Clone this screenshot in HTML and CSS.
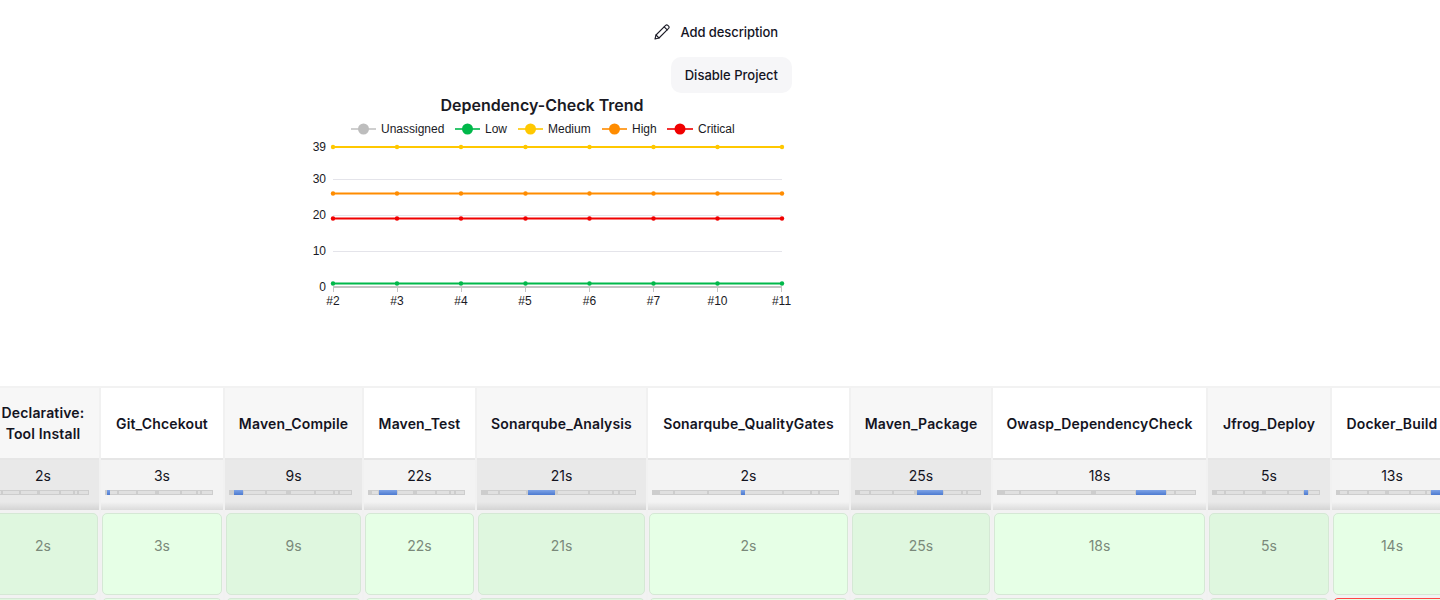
FILE: index.html
```html
<!DOCTYPE html>
<html lang="en">
<head>
  <meta charset="UTF-8" />
  <meta name="viewport" content="width=device-width, initial-scale=1.0"/>
  <title>Pipeline</title>
  <link rel="stylesheet" href="styles.css">
</head>
<body>
  <div class="top">
    <a class="action" href="#">
      <svg class="pencil" width="16" height="16" viewBox="0 0 16 16" fill="none" stroke="#1b1b26" stroke-width="1.1" stroke-linejoin="round" stroke-linecap="round">
        <path d="M1 15l1-4L11.6 1.4a1.6 1.6 0 0 1 2.2 0l.8.8a1.6 1.6 0 0 1 0 2.2L5 14z"/>
        <path d="M10.2 2.8l3 3"/>
        <path d="M2 11l3 3"/>
      </svg>
      Add description
    </a>
    <button class="disable">Disable Project</button>

    <svg class="chart" width="492" height="214" viewBox="300 96 492 214">
      <text class="chart-title" x="542" y="111" text-anchor="middle">Dependency-Check Trend</text>

      <g class="legend">
        <line x1="351" x2="376" y1="129" y2="129" stroke="#c4c4c4"/><circle cx="363.500" cy="129" r="5.500" fill="#bdbdbd"/><text x="381" y="133">Unassigned</text>
        <line x1="455" x2="480" y1="129" y2="129" stroke="#00b84a"/><circle cx="467.500" cy="129" r="5.500" fill="#00b84a"/><text x="485" y="133">Low</text>
        <line x1="518" x2="543" y1="129" y2="129" stroke="#ffc800"/><circle cx="530.500" cy="129" r="5.500" fill="#ffc800"/><text x="548" y="133">Medium</text>
        <line x1="602" x2="627" y1="129" y2="129" stroke="#ff8c00"/><circle cx="614.500" cy="129" r="5.500" fill="#ff8c00"/><text x="632" y="133">High</text>
        <line x1="667" x2="693" y1="129" y2="129" stroke="#f00000"/><circle cx="680" cy="129" r="5.500" fill="#f00000"/><text x="698" y="133">Critical</text>
      </g>

      <g class="grid">
        <line x1="333" x2="782" y1="179.500" y2="179.500"/>
        <line x1="333" x2="782" y1="215.500" y2="215.500"/>
        <line x1="333" x2="782" y1="251.500" y2="251.500"/>
      </g>
      <line x1="333" x2="782" y1="287" y2="287" stroke="#c4c4c4" stroke-width="2"/>
      <g class="ticks">
        <line x1="333.500" x2="333.500" y1="287" y2="292"/>
        <line x1="397.500" x2="397.500" y1="287" y2="292"/>
        <line x1="461.500" x2="461.500" y1="287" y2="292"/>
        <line x1="525.500" x2="525.500" y1="287" y2="292"/>
        <line x1="589.500" x2="589.500" y1="287" y2="292"/>
        <line x1="653.500" x2="653.500" y1="287" y2="292"/>
        <line x1="717.500" x2="717.500" y1="287" y2="292"/>
        <line x1="781.500" x2="781.500" y1="287" y2="292"/>
      </g>

      <g class="y-labels">
        <text x="326" y="151">39</text>
        <text x="326" y="183">30</text>
        <text x="326" y="219">20</text>
        <text x="326" y="255">10</text>
        <text x="326" y="291">0</text>
      </g>
      <g class="x-labels">
        <text x="333" y="305">#2</text>
        <text x="397" y="305">#3</text>
        <text x="461" y="305">#4</text>
        <text x="525" y="305">#5</text>
        <text x="589.500" y="305">#6</text>
        <text x="653.500" y="305">#7</text>
        <text x="717.500" y="305">#10</text>
        <text x="781.500" y="305">#11</text>
      </g>

      <g class="series" stroke="#ffc800" fill="#ffc800">
        <line x1="333" x2="782" y1="147" y2="147"/>
        <circle cx="333" cy="147" r="2.200"/><circle cx="397" cy="147" r="2.200"/><circle cx="461" cy="147" r="2.200"/><circle cx="525.500" cy="147" r="2.200"/><circle cx="589.500" cy="147" r="2.200"/><circle cx="653.500" cy="147" r="2.200"/><circle cx="717.500" cy="147" r="2.200"/><circle cx="782" cy="147" r="2.200"/>
      </g>
      <g class="series" stroke="#ff8c00" fill="#ff8c00">
        <line x1="333" x2="782" y1="193.500" y2="193.500"/>
        <circle cx="333" cy="193.500" r="2.200"/><circle cx="397" cy="193.500" r="2.200"/><circle cx="461" cy="193.500" r="2.200"/><circle cx="525.500" cy="193.500" r="2.200"/><circle cx="589.500" cy="193.500" r="2.200"/><circle cx="653.500" cy="193.500" r="2.200"/><circle cx="717.500" cy="193.500" r="2.200"/><circle cx="782" cy="193.500" r="2.200"/>
      </g>
      <g class="series" stroke="#f00000" fill="#f00000">
        <line x1="333" x2="782" y1="218.500" y2="218.500"/>
        <circle cx="333" cy="218.500" r="2.200"/><circle cx="397" cy="218.500" r="2.200"/><circle cx="461" cy="218.500" r="2.200"/><circle cx="525.500" cy="218.500" r="2.200"/><circle cx="589.500" cy="218.500" r="2.200"/><circle cx="653.500" cy="218.500" r="2.200"/><circle cx="717.500" cy="218.500" r="2.200"/><circle cx="782" cy="218.500" r="2.200"/>
      </g>
      <g class="series" stroke="#00b84a" fill="#00b84a">
        <line x1="333" x2="782" y1="283.500" y2="283.500"/>
        <circle cx="333" cy="283.500" r="2.200"/><circle cx="397" cy="283.500" r="2.200"/><circle cx="461" cy="283.500" r="2.200"/><circle cx="525.500" cy="283.500" r="2.200"/><circle cx="589.500" cy="283.500" r="2.200"/><circle cx="653.500" cy="283.500" r="2.200"/><circle cx="717.500" cy="283.500" r="2.200"/><circle cx="782" cy="283.500" r="2.200"/>
      </g>
    </svg>
  </div>

  <div class="stages">
    <div class="col odd">
      <div class="head">Declarative:<br>Tool Install</div>
      <div class="avg"><span>2s</span><div class="bar"><i style="left:0%;width:1.7%"></i></div></div>
      <div class="cell"><span>2s</span></div>
      <div class="cell"></div>
    </div>
    <div class="col">
      <div class="head">Git_Chcekout</div>
      <div class="avg"><span>3s</span><div class="bar"><i style="left:1.7%;width:2.5%"></i></div></div>
      <div class="cell"><span>3s</span></div>
      <div class="cell"></div>
    </div>
    <div class="col odd">
      <div class="head">Maven_Compile</div>
      <div class="avg"><span>9s</span><div class="bar"><i style="left:4.2%;width:7.5%"></i></div></div>
      <div class="cell"><span>9s</span></div>
      <div class="cell"></div>
    </div>
    <div class="col">
      <div class="head">Maven_Test</div>
      <div class="avg"><span>22s</span><div class="bar"><i style="left:11.7%;width:18.3%"></i></div></div>
      <div class="cell"><span>22s</span></div>
      <div class="cell"></div>
    </div>
    <div class="col odd">
      <div class="head">Sonarqube_Analysis</div>
      <div class="avg"><span>21s</span><div class="bar"><i style="left:30%;width:17.5%"></i></div></div>
      <div class="cell"><span>21s</span></div>
      <div class="cell"></div>
    </div>
    <div class="col">
      <div class="head">Sonarqube_QualityGates</div>
      <div class="avg"><span>2s</span><div class="bar"><i style="left:47.5%;width:2.5%"></i></div></div>
      <div class="cell"><span>2s</span></div>
      <div class="cell"></div>
    </div>
    <div class="col odd">
      <div class="head">Maven_Package</div>
      <div class="avg"><span>25s</span><div class="bar"><i style="left:49.2%;width:20.8%"></i></div></div>
      <div class="cell"><span>25s</span></div>
      <div class="cell"></div>
    </div>
    <div class="col">
      <div class="head">Owasp_DependencyCheck</div>
      <div class="avg"><span>18s</span><div class="bar"><i style="left:70%;width:15%"></i></div></div>
      <div class="cell"><span>18s</span></div>
      <div class="cell"></div>
    </div>
    <div class="col odd">
      <div class="head">Jfrog_Deploy</div>
      <div class="avg"><span>5s</span><div class="bar"><i style="left:85%;width:4.200%"></i></div></div>
      <div class="cell"><span>5s</span></div>
      <div class="cell"></div>
    </div>
    <div class="col">
      <div class="head">Docker_Build</div>
      <div class="avg"><span>13s</span><div class="bar"><i style="left:89.2%;width:10.8%"></i></div></div>
      <div class="cell"><span>14s</span></div>
      <div class="cell failed"></div>
    </div>
  </div>
</body>
</html>
```

FILE: styles.css
```css
body {
  margin: 0;
  height: 600px;
  overflow: hidden;
  background: #fff;
  font-family: Inter, "Liberation Sans", sans-serif;
  color: #14141f;
}

.top {
  width: 792px;
  padding-top: 14px;
  display: flex;
  flex-direction: column;
  align-items: flex-end;
}

.action {
  height: 36px;
  padding: 0 14px;
  display: flex;
  align-items: center;
  gap: 10px;
  font-size: 13px;
  font-weight: 500;
  letter-spacing: -0.08px;
  color: #14141f;
  text-decoration: none;
}

.disable {
  height: 36px;
  margin-top: 7px;
  padding: 0 14px;
  border: none;
  border-radius: 10px;
  background: #f6f6f8;
  font-family: inherit;
  font-size: 13px;
  font-weight: 500;
  color: #14141f;
}

.chart {
  display: block;
  margin-top: 3px;
  font-family: "Liberation Sans", Arial, sans-serif;
  font-size: 12px;
}

.chart text {
  fill: #1a1a24;
}

.chart .chart-title {
  font-family: Inter, sans-serif;
  font-size: 16px;
  font-weight: 600;
}

.legend line {
  stroke-width: 2;
  opacity: 0.8;
}

.grid line {
  stroke: #e4e4ea;
  stroke-width: 1;
}

.ticks line {
  stroke: #c4c4c4;
  stroke-width: 1;
}

.y-labels text {
  text-anchor: end;
}

.x-labels text {
  text-anchor: middle;
}

.series line {
  stroke-width: 2;
}

.series circle {
  stroke: none;
}

.stages {
  margin-top: 76px;
  margin-left: -13px;
  display: grid;
  grid-template-columns: 112px 122px 137px 111px 169px 201px 140px 213px 122px 120px;
  column-gap: 2px;
  width: max-content;
  height: 212px;
  overflow: hidden;
  border-top: 2px solid #f2f2f2;
  background: #f1f1f1;
}

.col {
  display: flex;
  flex-direction: column;
  background: #f2f2f2;
}

.head {
  height: 70px;
  flex-shrink: 0;
  display: flex;
  align-items: center;
  justify-content: center;
  text-align: center;
  white-space: nowrap;
  font-size: 14px;
  font-weight: 600;
  letter-spacing: 0.15px;
  line-height: 21px;
  background: #fff;
}

.odd .head {
  background: #f7f7f7;
}

.avg {
  height: 50px;
  flex-shrink: 0;
  margin-top: 2px;
  border-top: 0;
  text-align: center;
  font-size: 14px;
  background: linear-gradient(#f3f3f3 42px, #dcdcdc);
  box-shadow: 0 -2px 0 #e6e6e6;
}

.odd .avg {
  background: linear-gradient(#e9e9e9 42px, #d4d4d4);
}

.avg span {
  display: block;
  height: 30px;
  line-height: 32px;
}

/* stage boundaries of the whole run, in percent of its duration */
.bar {
  position: relative;
  height: 5px;
  margin: 0 10px 0 4px;
  box-shadow: inset 0 0 0 1px #cdcdcd;
  background: linear-gradient(90deg,
    #cdcdcd 4.2%, #e0e0e0 4.2%,
    #e0e0e0 calc(11.7% - 1px), #cdcdcd calc(11.7% - 1px), #cdcdcd calc(11.7% + 1px), #e0e0e0 calc(11.7% + 1px),
    #e0e0e0 calc(30% - 1px), #cdcdcd calc(30% - 1px), #cdcdcd calc(30% + 1px), #e0e0e0 calc(30% + 1px),
    #e0e0e0 calc(47.5% - 1px), #cdcdcd calc(47.5% - 1px), #cdcdcd calc(49.2% + 1px), #e0e0e0 calc(49.2% + 1px),
    #e0e0e0 calc(70% - 1px), #cdcdcd calc(70% - 1px), #cdcdcd calc(70% + 1px), #e0e0e0 calc(70% + 1px),
    #e0e0e0 calc(85% - 1px), #cdcdcd calc(85% - 1px), #cdcdcd calc(85% + 1px), #e0e0e0 calc(85% + 1px),
    #e0e0e0 calc(89.2% - 1px), #cdcdcd calc(89.2% - 1px), #cdcdcd calc(89.2% + 1px), #e0e0e0 calc(89.2% + 1px));
}

.bar i {
  position: absolute;
  top: 0;
  bottom: 0;
  background: linear-gradient(#7ea3e6, #4c7ad0);
}

.cell {
  height: 82px;
  flex-shrink: 0;
  margin: 3px 1px 1px;
  padding-bottom: 17px;
  display: flex;
  align-items: center;
  justify-content: center;
  box-sizing: border-box;
  border: 1px solid #d5e8d5;
  border-radius: 5px;
  background: #e6ffe6;
  font-size: 14px;
  color: #7a897a;
}

.odd .cell {
  background: #dff7df;
}

.cell + .cell {
  margin-top: 2px;
}

.cell.failed {
  border-color: #f44;
}
```
